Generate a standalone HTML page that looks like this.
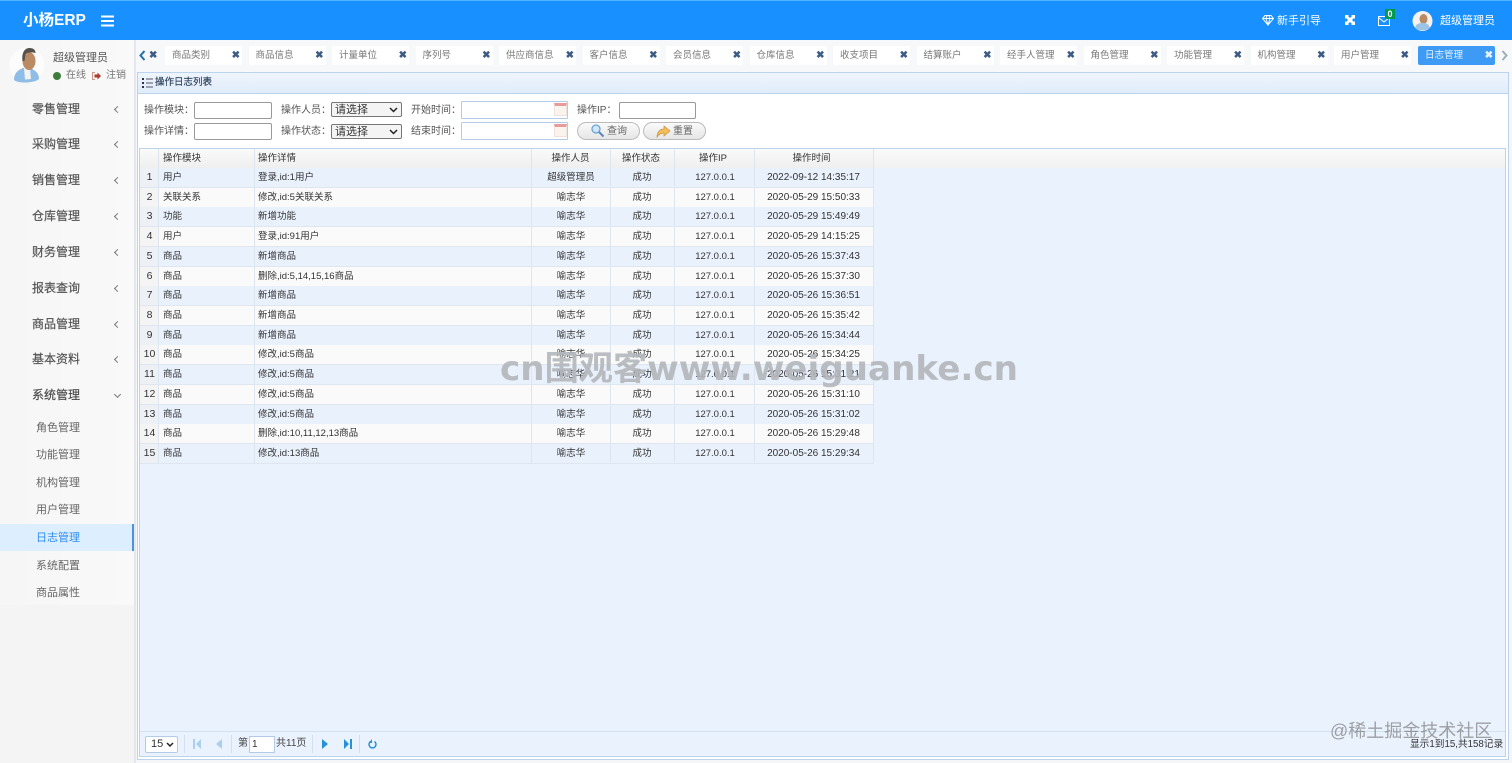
<!DOCTYPE html>
<html lang="zh"><head><meta charset="utf-8"><title>小杨ERP</title>
<style>
html,body{margin:0;padding:0;width:1512px;height:763px;overflow:hidden;background:#fff}
body{position:relative;font-family:"Liberation Sans","Noto Sans CJK SC",sans-serif;font-size:10px;color:#444}
div,span,svg{position:absolute;box-sizing:border-box;white-space:nowrap}
.m{left:32px;font-size:12px;color:#555;width:60px;line-height:18px;-webkit-text-stroke:.2px #555}
.c{left:115px;width:5px;height:5px;border-left:1px solid #777;border-bottom:1px solid #777;transform:rotate(45deg)}
.s{left:36px;font-size:11px;color:#666;line-height:18px}
.t{top:46px;width:77px;height:19px;background:#fff;line-height:20px;padding-left:7px;color:#777;font-size:9.500px;border-radius:2px}
.t b{position:absolute;right:2px;top:0;color:#3d5c85;font-size:10px;font-weight:bold}
.l{font-size:10px;color:#555;line-height:14px}
.i{height:16px;background:#fff;border:1px solid #999;border-radius:2px}
.d{left:461px;width:107px;height:17px;background:#fff;border:1px solid #b4cbe8;border-radius:1px}
.cal{left:554px;width:13px;height:13px;background:#fbf3ee;border:1px solid #efe2dc;border-top:3px solid #e99a9a}
.sel{left:331px;width:71px;height:15px;background:#f4f4f4;border:1px solid #777;border-radius:2px;font-size:11px;line-height:14px;padding-left:3px;color:#333}
.sel svg,.ps svg{right:3px;top:4px}
.btn{top:122px;width:63px;height:18px;border:1px solid #bbb;border-radius:9px;background:linear-gradient(#fafafa,#e6e6e6);line-height:18px;font-size:10px;color:#666;padding-left:29px}
#g{left:139px;top:148px;width:1367px;height:609px;background:#eaf2fd;border:1px solid #bcd3ee}
.h{left:0;top:0;width:733px;height:19px;background:linear-gradient(#fafafa,#efefef)}
.hr{left:733px;top:0;width:632px;height:19px;background:linear-gradient(#fafafa,#f1f1f1)}
.r{left:0;width:733px;height:20px;border-bottom:1px solid #dfe6ef}
.a{background:#e9f1fc}.w{background:#fafafa}
.r span,.h span{top:0;line-height:19px;font-size:9.500px;color:#333}
.h span{line-height:20px}
.v{top:0;width:1px;height:315px;background:#dde5ef}
.r span.n{left:0;width:19px;height:19px;text-align:center;color:#333;font-size:10.500px;background:rgba(240,240,240,.6)}
.c1{left:23px}.c2{left:118px}
.c3{left:391.500px;width:79px;text-align:center}
.c4{left:470px;width:64px;text-align:center}
.c5{left:535px;width:80px;text-align:center}
.c6{left:614px;width:119px;text-align:center}
.r span.c6{font-size:10px}
.h .c3{left:391px}.h .c4{left:469px}.h .c5{left:533px}.h .c6{left:612px}
</style></head><body>

<div style="left:0;top:0;width:1512px;height:40px;background:#1890ff;border-top:1px solid #4fb4ff"></div>
<div style="left:23px;top:10px;font-size:15.500px;font-weight:bold;color:#fff;line-height:22px">小杨ERP</div>
<svg style="left:101px;top:15px" width="13" height="12"><path d="M0 1.500h13M0 6h13M0 10.500h13" stroke="#fff" stroke-width="2"/></svg>

<svg style="left:1262px;top:15px" width="12" height="11" viewBox="0 0 12 11"><path d="M3 .5h6l2.500 3L6 10 .5 3.500zM.5 3.500h11M4 3.500 6 10l2-6.500M4 3.500 5 .8M8 3.500 7 .8" fill="none" stroke="#fff"/></svg>
<div style="left:1277px;top:13px;color:#fff;font-size:11px;line-height:16px">新手引导</div>
<svg style="left:1345px;top:15px" width="10" height="10" viewBox="0 0 10 10"><path d="M0 0h4L3 1l6 6 1-1v4H6l1-1-6-6-1 1zM10 0v4L9 3 3 9l1 1H0V6l1 1 6-6-1-1z" fill="#fff"/></svg>
<svg style="left:1378px;top:16px" width="12" height="10" viewBox="0 0 12 10"><path d="M.5.500h11v9H.5zM.5 1.500 6 6l5.500-4.500" fill="none" stroke="#fff"/></svg>
<div style="left:1385px;top:9px;width:10px;height:10px;background:#009a4d;color:#fff;font-size:9px;font-weight:bold;line-height:10px;text-align:center">0</div>
<svg style="left:1412px;top:11px" width="21" height="20" viewBox="0 0 21 20"><circle cx="10.500" cy="10" r="10" fill="#f6f2ee"/><ellipse cx="11.500" cy="8" rx="4" ry="5" fill="#b98a63"/><path d="M3 17c1-5 5-5 8-5s6 1 7 5c-3 3-12 3-15 0z" fill="#9cc4e6"/></svg>
<div style="left:1440px;top:13px;color:#fff;font-size:11px;line-height:16px">超级管理员</div>

<div style="left:0;top:40px;width:134px;height:723px;background:linear-gradient(90deg,#f6f6f6,#f9f9f9)"></div>
<div style="left:0;top:605px;width:134px;height:158px;background:#f4f4f4"></div>
<div style="left:134px;top:40px;width:2px;height:723px;background:#e4e8ee"></div>
<svg style="left:9px;top:47px" width="36" height="37" viewBox="0 0 36 37"><circle cx="18" cy="18" r="17.500" fill="#fcfcfc"/><path d="M5 33c0-7 4-10 9-12h7c5 2 9 5 9 11-4 4-20 5-25 1z" fill="#8fbde6"/><path d="M15 21h6l1 11-6 .5z" fill="#f2f2f2"/><ellipse cx="20" cy="14" rx="6.500" ry="9" fill="#b98a63"/><path d="M13.500 14c-1-8 2-13 7-13 4 0 6 2 6 5-4-1-8-1-10 1l-1 7z" fill="#55524c"/></svg>
<div style="left:53px;top:50px;font-size:11px;color:#555;line-height:16px">超级管理员</div>
<svg style="left:53px;top:72px" width="8" height="8"><circle cx="4" cy="4" r="4" fill="#3c7d3c"/></svg>
<div style="left:66px;top:69px;font-size:10px;color:#777;line-height:14px">在线</div>
<svg style="left:92px;top:72px" width="9" height="8" viewBox="0 0 9 8"><path d="M3 .5H.5v7H3" fill="none" stroke="#c98" /><path d="M2.500 2.500h3V.5L9 4 5.500 7.500v-2h-3z" fill="#b03a2e"/></svg>
<div style="left:106px;top:69px;font-size:10px;color:#777;line-height:14px">注销</div>

<div class="m" style="top:100px">零售管理</div><div class="c" style="top:107px"></div>
<div class="m" style="top:135px">采购管理</div><div class="c" style="top:142px"></div>
<div class="m" style="top:171px">销售管理</div><div class="c" style="top:178px"></div>
<div class="m" style="top:207px">仓库管理</div><div class="c" style="top:214px"></div>
<div class="m" style="top:243px">财务管理</div><div class="c" style="top:250px"></div>
<div class="m" style="top:279px">报表查询</div><div class="c" style="top:286px"></div>
<div class="m" style="top:315px">商品管理</div><div class="c" style="top:322px"></div>
<div class="m" style="top:350px">基本资料</div><div class="c" style="top:357px"></div>
<div class="m" style="top:386px;color:#444">系统管理</div><div class="c" style="top:392px;transform:rotate(-45deg)"></div>

<div style="left:0;top:524px;width:134px;height:27px;background:#ddeeff"></div>
<div style="left:132px;top:524px;width:2px;height:27px;background:#4c93dc"></div>
<div class="s" style="top:419px">角色管理</div>
<div class="s" style="top:446px">功能管理</div>
<div class="s" style="top:474px">机构管理</div>
<div class="s" style="top:501px">用户管理</div>
<div class="s" style="top:529px;color:#2f8df0">日志管理</div>
<div class="s" style="top:557px">系统配置</div>
<div class="s" style="top:584px">商品属性</div>

<div style="left:136px;top:40px;width:1376px;height:32px;background:#f7f8fa"></div>
<div style="left:136px;top:72px;width:1376px;height:691px;background:#f4f6f8"></div>
<svg style="left:139px;top:50px" width="7" height="11" viewBox="0 0 7 11"><path d="M5.500 1 1.500 5.500l4 4.500" fill="none" stroke="#1f6fa8" stroke-width="2"/></svg>
<div style="left:149px;top:46px;color:#3d5c85;font-size:10px;font-weight:bold;line-height:19px">✖</div>
<div class="t" style="left:165px">商品类别<b>✖</b></div>
<div class="t" style="left:248.500px">商品信息<b>✖</b></div>
<div class="t" style="left:332px">计量单位<b>✖</b></div>
<div class="t" style="left:415.500px">序列号<b>✖</b></div>
<div class="t" style="left:499px">供应商信息<b>✖</b></div>
<div class="t" style="left:582.500px">客户信息<b>✖</b></div>
<div class="t" style="left:666px">会员信息<b>✖</b></div>
<div class="t" style="left:749.500px">仓库信息<b>✖</b></div>
<div class="t" style="left:833px">收支项目<b>✖</b></div>
<div class="t" style="left:916.500px">结算账户<b>✖</b></div>
<div class="t" style="left:1000px">经手人管理<b>✖</b></div>
<div class="t" style="left:1083.500px">角色管理<b>✖</b></div>
<div class="t" style="left:1167px">功能管理<b>✖</b></div>
<div class="t" style="left:1250.500px">机构管理<b>✖</b></div>
<div class="t" style="left:1334px">用户管理<b>✖</b></div>
<div class="t" style="left:1418px;background:#3d9bf5;color:#e8f3ff">日志管理<b style="color:#e8f3ff">✖</b></div>
<svg style="left:1501px;top:50px" width="7" height="11" viewBox="0 0 7 11"><path d="M1.500 1l4 4.500-4 4.500" fill="none" stroke="#9fb0b5" stroke-width="2"/></svg>

<div style="left:137px;top:72px;width:1372px;height:688px;background:#fff;border:1px solid #bcd3ee"></div>
<div style="left:137px;top:72px;width:1372px;height:22px;background:linear-gradient(#eff5fd,#e0ecfa);border:1px solid #bcd3ee"></div>
<svg style="left:142px;top:78px" width="11" height="10" viewBox="0 0 11 10"><path d="M0 0h2v2H0zM0 4h2v2H0zM0 8h2v2H0z" fill="#334"/><path d="M4 1h7M4 5h7M4 9h7" stroke="#556" stroke-width="1"/></svg>
<div style="left:155px;top:76px;font-size:9.500px;color:#33475f;line-height:14px;-webkit-text-stroke:.2px #33475f">操作日志列表</div>

<div class="l" style="left:144px;top:104px">操作模块：</div>
<div class="i" style="left:194px;top:102px;width:78px;height:17px"></div>
<div class="l" style="left:281px;top:104px">操作人员：</div>
<div class="sel" style="top:102px">请选择<svg width="9" height="6"><path d="M1 1l3.500 3.500L8 1" fill="none" stroke="#222" stroke-width="1.500"/></svg></div>
<div class="l" style="left:411px;top:104px">开始时间：</div>
<div class="d" style="top:101px;height:18px"></div><div class="cal" style="top:103px"></div>
<div class="l" style="left:577px;top:104px">操作IP：</div>
<div class="i" style="left:619px;top:102px;width:77px;height:17px"></div>

<div class="l" style="left:144px;top:125px">操作详情：</div>
<div class="i" style="left:194px;top:123px;width:78px;height:17px"></div>
<div class="l" style="left:281px;top:125px">操作状态：</div>
<div class="sel" style="top:124px">请选择<svg width="9" height="6"><path d="M1 1l3.500 3.500L8 1" fill="none" stroke="#222" stroke-width="1.500"/></svg></div>
<div class="l" style="left:411px;top:125px">结束时间：</div>
<div class="d" style="top:122px;height:18px"></div><div class="cal" style="top:124px"></div>
<div class="btn" style="left:577px">查询</div>
<svg style="left:590px;top:124px" width="15" height="14" viewBox="0 0 15 14"><circle cx="6" cy="5" r="4" fill="#cfe6fb" stroke="#6da3d8" stroke-width="1.300"/><path d="M9 8l4.500 4.500" stroke="#5c88b8" stroke-width="2"/></svg>
<div class="btn" style="left:643px">重置</div>
<svg style="left:656px;top:124px" width="15" height="14" viewBox="0 0 15 14"><path d="M1 13c0-5 3-8 7-8V2l6 5-6 5V9c-3 0-5 1-7 4z" fill="#f2bf5a" stroke="#c9923a" stroke-width=".7"/></svg>

<div id="g">
<div class="hr"></div>
<div class="h"><span class="c1">操作模块</span><span class="c2">操作详情</span><span class="c3">操作人员</span><span class="c4">操作状态</span><span class="c5">操作IP</span><span class="c6">操作时间</span></div>
<div class="r a" style="top:19px"><span class="n">1</span><span class="c1">用户</span><span class="c2">登录,id:1用户</span><span class="c3">超级管理员</span><span class="c4">成功</span><span class="c5">127.0.0.1</span><span class="c6">2022-09-12 14:35:17</span></div>
<div class="r w" style="top:38.710px"><span class="n">2</span><span class="c1">关联关系</span><span class="c2">修改,id:5关联关系</span><span class="c3">喻志华</span><span class="c4">成功</span><span class="c5">127.0.0.1</span><span class="c6">2020-05-29 15:50:33</span></div>
<div class="r a" style="top:58.420px"><span class="n">3</span><span class="c1">功能</span><span class="c2">新增功能</span><span class="c3">喻志华</span><span class="c4">成功</span><span class="c5">127.0.0.1</span><span class="c6">2020-05-29 15:49:49</span></div>
<div class="r w" style="top:78.130px"><span class="n">4</span><span class="c1">用户</span><span class="c2">登录,id:91用户</span><span class="c3">喻志华</span><span class="c4">成功</span><span class="c5">127.0.0.1</span><span class="c6">2020-05-29 14:15:25</span></div>
<div class="r a" style="top:97.840px"><span class="n">5</span><span class="c1">商品</span><span class="c2">新增商品</span><span class="c3">喻志华</span><span class="c4">成功</span><span class="c5">127.0.0.1</span><span class="c6">2020-05-26 15:37:43</span></div>
<div class="r w" style="top:117.550px"><span class="n">6</span><span class="c1">商品</span><span class="c2">删除,id:5,14,15,16商品</span><span class="c3">喻志华</span><span class="c4">成功</span><span class="c5">127.0.0.1</span><span class="c6">2020-05-26 15:37:30</span></div>
<div class="r a" style="top:137.260px"><span class="n">7</span><span class="c1">商品</span><span class="c2">新增商品</span><span class="c3">喻志华</span><span class="c4">成功</span><span class="c5">127.0.0.1</span><span class="c6">2020-05-26 15:36:51</span></div>
<div class="r w" style="top:156.970px"><span class="n">8</span><span class="c1">商品</span><span class="c2">新增商品</span><span class="c3">喻志华</span><span class="c4">成功</span><span class="c5">127.0.0.1</span><span class="c6">2020-05-26 15:35:42</span></div>
<div class="r a" style="top:176.680px"><span class="n">9</span><span class="c1">商品</span><span class="c2">新增商品</span><span class="c3">喻志华</span><span class="c4">成功</span><span class="c5">127.0.0.1</span><span class="c6">2020-05-26 15:34:44</span></div>
<div class="r w" style="top:196.390px"><span class="n">10</span><span class="c1">商品</span><span class="c2">修改,id:5商品</span><span class="c3">喻志华</span><span class="c4">成功</span><span class="c5">127.0.0.1</span><span class="c6">2020-05-26 15:34:25</span></div>
<div class="r a" style="top:216.100px"><span class="n">11</span><span class="c1">商品</span><span class="c2">修改,id:5商品</span><span class="c3">喻志华</span><span class="c4">成功</span><span class="c5">127.0.0.1</span><span class="c6">2020-05-26 15:31:21</span></div>
<div class="r w" style="top:235.810px"><span class="n">12</span><span class="c1">商品</span><span class="c2">修改,id:5商品</span><span class="c3">喻志华</span><span class="c4">成功</span><span class="c5">127.0.0.1</span><span class="c6">2020-05-26 15:31:10</span></div>
<div class="r a" style="top:255.520px"><span class="n">13</span><span class="c1">商品</span><span class="c2">修改,id:5商品</span><span class="c3">喻志华</span><span class="c4">成功</span><span class="c5">127.0.0.1</span><span class="c6">2020-05-26 15:31:02</span></div>
<div class="r w" style="top:275.230px"><span class="n">14</span><span class="c1">商品</span><span class="c2">删除,id:10,11,12,13商品</span><span class="c3">喻志华</span><span class="c4">成功</span><span class="c5">127.0.0.1</span><span class="c6">2020-05-26 15:29:48</span></div>
<div class="r a" style="top:294.940px"><span class="n">15</span><span class="c1">商品</span><span class="c2">修改,id:13商品</span><span class="c3">喻志华</span><span class="c4">成功</span><span class="c5">127.0.0.1</span><span class="c6">2020-05-26 15:29:34</span></div>
<div class="v" style="left:18px"></div><div class="v" style="left:114px"></div><div class="v" style="left:391px"></div><div class="v" style="left:470px"></div><div class="v" style="left:534px"></div><div class="v" style="left:614px"></div><div class="v" style="left:733px"></div>
</div>

<div style="left:140px;top:731px;width:1365px;height:1px;background:#d3e0f0"></div>
<div class="ps" style="left:145px;top:736px;width:33px;height:17px;background:#fff;border:1px solid #b4cbe8;border-radius:2px;font-size:11px;line-height:15px;padding-left:5px;color:#333">15<svg width="8" height="6" style="top:5px"><path d="M1 1l3 3 3-3" fill="none" stroke="#222" stroke-width="1.500"/></svg></div>
<svg style="left:193px;top:739px" width="8" height="10" viewBox="0 0 8 10"><path d="M0 0h2v10H0zM8 0v10L3 5z" fill="#a9d0ee"/></svg>
<svg style="left:216px;top:739px" width="6" height="10" viewBox="0 0 6 10"><path d="M6 0v10L0 5z" fill="#a9d0ee"/></svg>
<div style="left:183.500px;top:735px;width:1px;height:18px;background:#d3dfee"></div>
<div style="left:231px;top:735px;width:1px;height:18px;background:#d3dfee"></div>
<div style="left:238px;top:737px;font-size:10px;color:#444;line-height:14px">第</div>
<div style="left:249px;top:736px;width:26px;height:17px;background:#fff;border:1px solid #b4cbe8;font-size:10px;line-height:15px;padding-left:2px;color:#333">1</div>
<div style="left:276px;top:737px;font-size:10px;color:#444;line-height:14px">共11页</div>
<div style="left:312px;top:735px;width:1px;height:18px;background:#d3dfee"></div>
<svg style="left:322px;top:739px" width="6" height="10" viewBox="0 0 6 10"><path d="M0 0v10l6-5z" fill="#2592d8"/></svg>
<svg style="left:344px;top:739px" width="8" height="10" viewBox="0 0 8 10"><path d="M0 0v10l5-5zM6 0h2v10H6z" fill="#2592d8"/></svg>
<div style="left:359px;top:735px;width:1px;height:18px;background:#d3dfee"></div>
<svg style="left:368px;top:739px" width="9" height="10" viewBox="0 0 9 10"><path d="M2.500 2.500a3.500 3.500 0 1 0 4 0" fill="none" stroke="#2592d8" stroke-width="1.500"/><path d="M3 0v4H0z" fill="#2592d8" transform="translate(1 0)"/></svg>

<div style="left:1410px;top:738px;font-size:9.700px;color:#333;line-height:14px">显示1到15,共158记录</div>

<div style="left:500px;top:346px;font-size:34.200px;font-weight:bold;color:rgba(178,182,186,.9);line-height:46px;font-family:'DejaVu Sans','Noto Sans CJK SC',sans-serif">cn围观客www.weiguanke.cn</div>
<div style="left:1330px;top:719px;font-size:18px;color:rgba(110,110,110,.62);line-height:24px">@稀土掘金技术社区</div>
</body></html>
